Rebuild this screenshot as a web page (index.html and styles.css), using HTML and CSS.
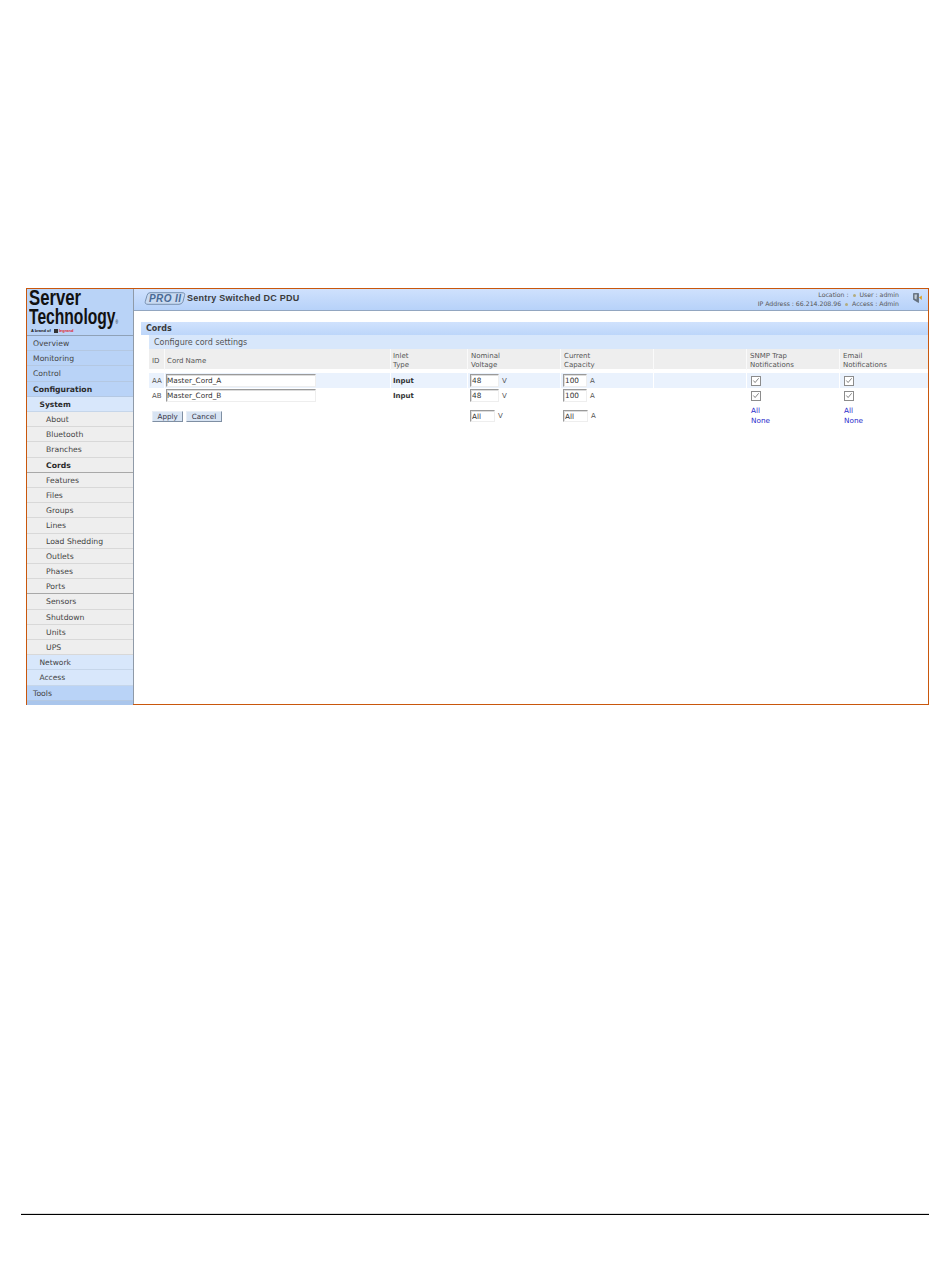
FILE: index.html
```html
<!DOCTYPE html>
<html lang="en">
<head>
<meta charset="utf-8">
<title>Cords</title>
<link rel="stylesheet" href="styles.css">
</head>
<body>
<div class="frame">
  <aside class="side">
    <div class="logo">
      <div class="logo-word logo-server">Server</div>
      <div class="logo-word logo-tech">Technology<span class="logo-reg">®</span></div>
      <div class="logo-sub">A brand of <span class="logo-box"></span><span class="logo-red">legrand</span></div>
    </div>
    <nav class="menu">
      <a class="m m1">Overview</a>
      <a class="m m1">Monitoring</a>
      <a class="m m1">Control</a>
      <a class="m m1 on">Configuration</a>
      <a class="m m2 on">System</a>
      <a class="m m3">About</a>
      <a class="m m3">Bluetooth</a>
      <a class="m m3">Branches</a>
      <a class="m m3 on dark">Cords</a>
      <a class="m m3">Features</a>
      <a class="m m3">Files</a>
      <a class="m m3">Groups</a>
      <a class="m m3">Lines</a>
      <a class="m m3">Load Shedding</a>
      <a class="m m3">Outlets</a>
      <a class="m m3">Phases</a>
      <a class="m m3 dark">Ports</a>
      <a class="m m3">Sensors</a>
      <a class="m m3">Shutdown</a>
      <a class="m m3">Units</a>
      <a class="m m3">UPS</a>
      <a class="m m2">Network</a>
      <a class="m m2">Access</a>
      <a class="m m1">Tools</a>
    </nav>
  </aside>
  <main class="main">
    <header class="top">
      <div class="brand">
        <svg class="pro" width="42" height="13" viewBox="0 0 42 13">
          <path d="M6 .7H38Q41.5.7 40.5 3.5L39 9.5Q38 12.3 35 12.3H4Q.6 12.3 1.3 9.5L3 3.5Q3.7.7 6 .7Z" fill="#c9daf1" stroke="#7790b0" stroke-width="1"/>
          <text class="pro-text" x="5" y="10">PRO II</text>
        </svg>
        <span class="title">Sentry Switched DC PDU</span>
      </div>
      <div class="info">
        <div class="info-line">Location : <i class="dot"></i> User : admin</div>
        <div class="info-line">IP Address : 66.214.208.96 <i class="dot"></i> Access : Admin</div>
      </div>
      <svg class="logout" width="9" height="10" viewBox="0 0 9 10">
        <path d="M.5.5H5.5V9.5L3 8 .5 6.5Z" fill="#66727f" stroke="#4d5763" stroke-width=".6"/>
        <path d="M1.5 1.5H4L3.5 6.5 1.5 5.5Z" fill="#c3ccd6"/>
        <path d="M6 4.5 8.8 2.5V7Z" fill="#d9a11f"/>
      </svg>
    </header>
    <h1 class="h1">Cords</h1>
    <section class="body">
      <h2 class="h2">Configure cord settings</h2>
      <div class="grid head">
        <div class="th">ID</div>
        <div class="th">Cord Name</div>
        <div class="th">Inlet<br>Type</div>
        <div class="th">Nominal<br>Voltage</div>
        <div class="th">Current<br>Capacity</div>
        <div class="th"></div>
        <div class="th">SNMP Trap<br>Notifications</div>
        <div class="th">Email<br>Notifications</div>
      </div>
      <div class="grid row alt">
        <div class="td">AA</div>
        <div class="td"><input class="inp name" value="Master_Cord_A"></div>
        <div class="td"><b>Input</b></div>
        <div class="td"><input class="inp num" value="48"><span class="unit">V</span></div>
        <div class="td"><input class="inp cap" value="100"><span class="unit">A</span></div>
        <div class="td"></div>
        <div class="td"><span class="chk"><svg width="9" height="9" viewBox="0 0 9 9"><path d="M1.5 4.5 3.5 6.8 7.5 2" fill="none" stroke="#777" stroke-width="1"/></svg></span></div>
        <div class="td"><span class="chk"><svg width="9" height="9" viewBox="0 0 9 9"><path d="M1.5 4.5 3.5 6.8 7.5 2" fill="none" stroke="#777" stroke-width="1"/></svg></span></div>
      </div>
      <div class="grid row">
        <div class="td">AB</div>
        <div class="td"><input class="inp name" value="Master_Cord_B"></div>
        <div class="td"><b>Input</b></div>
        <div class="td"><input class="inp num" value="48"><span class="unit">V</span></div>
        <div class="td"><input class="inp cap" value="100"><span class="unit">A</span></div>
        <div class="td"></div>
        <div class="td"><span class="chk"><svg width="9" height="9" viewBox="0 0 9 9"><path d="M1.5 4.5 3.5 6.8 7.5 2" fill="none" stroke="#777" stroke-width="1"/></svg></span></div>
        <div class="td"><span class="chk"><svg width="9" height="9" viewBox="0 0 9 9"><path d="M1.5 4.5 3.5 6.8 7.5 2" fill="none" stroke="#777" stroke-width="1"/></svg></span></div>
      </div>
      <div class="grid actions">
        <div class="btns"><button class="btn">Apply</button><button class="btn">Cancel</button></div>
        <div class="td"><input class="inp all" value="All"><span class="unit">V</span></div>
        <div class="td"><input class="inp all" value="All"><span class="unit">A</span></div>
        <div class="td"></div>
        <div class="td links"><a>All</a><a>None</a></div>
        <div class="td links"><a>All</a><a>None</a></div>
      </div>
    </section>
  </main>
</div>
<div class="rule"></div>
</body>
</html>
```
FILE: styles.css
```css
* { box-sizing: border-box; }
html, body { margin: 0; padding: 0; background: #fff; }
body {
  padding: 288px 21px 0 26px;
  font-family: "DejaVu Sans", sans-serif;
  font-size: 7.5px;
  color: #444;
}
.frame {
  display: flex;
  height: 417px;
  border: 1px solid #c9570c;
}
.side {
  width: 107px;
  flex: none;
  display: flex;
  flex-direction: column;
  background: #b9d3f7;
  border-right: 1px solid #8f9aa8;
}
.logo {
  height: 47px;
  flex: none;
  padding: 0 0 0 2px;
  border-bottom: 1px solid #8fa1b7;
  color: #111;
}
.logo-word {
  font-family: "Liberation Sans", sans-serif;
  font-weight: 700;
  font-size: 22px;
  line-height: 18px;
  white-space: nowrap;
  transform-origin: left top;
}
.logo-server { transform: scaleX(.76); }
.logo-tech { transform: scaleX(.71); margin-top: 1px; }
.logo-reg { font-size: 5px; font-weight: 400; line-height: 0; }
.logo-sub {
  font-family: "Liberation Sans", sans-serif;
  font-size: 4px;
  font-weight: 700;
  line-height: 5px;
  margin-top: 2px;
  padding-left: 2px;
  display: flex;
  align-items: center;
  gap: 1px;
  white-space: pre;
}
.logo-box { width: 4px; height: 4px; margin-left: 1px; background: #333; }
.logo-red { color: #e0202c; }
.menu { display: flex; flex-direction: column; flex: none; padding-bottom: 4px; background: #aac6ec; height: 369px; }
.m {
  flex: 1 1 0;
  display: flex;
  align-items: center;
  padding-top: .6px;
  font-size: 7.7px;
  color: #444;
  border-bottom: 1px solid #b4c8e2;
  white-space: nowrap;
}
.m1 { padding-left: 6px; background: #b9d3f7; }
.m2 { padding-left: 12.5px; background: #d8e7fb; font-size: 7.5px; border-bottom-color: #c6d6ea; }
.m3 { padding-left: 19px; background: #eeeeee; border-bottom-color: #d8d8d8; }
.m.on { font-weight: 700; color: #2b2b2b; }
.m3.dark { border-bottom-color: #a8a8a8; }
.main { flex: 1; min-width: 0; display: flex; flex-direction: column; }
.top {
  height: 22px;
  flex: none;
  display: flex;
  align-items: flex-start;
  background: linear-gradient(#cfe1fd, #b7d2f9);
  border-bottom: 1px solid #92a6c0;
  padding-right: 6px;
}
.brand { display: flex; align-items: center; gap: 1px; padding: 2px 0 0 10px; flex: 1; }
.pro { flex: none; margin-top: 1px; }
.pro-text { font-family: "Liberation Sans", sans-serif; font-size: 10px; font-weight: 700; font-style: italic; fill: #4a6a96; letter-spacing: .4px; }
.title { font-family: "Liberation Sans", sans-serif; font-size: 9px; font-weight: 700; letter-spacing: .25px; color: #3a3a3a; }
.info { text-align: right; font-size: 6.2px; line-height: 9px; padding-top: 1px; color: #555; margin-right: 14px; }
.info-line { white-space: nowrap; }
.dot { display: inline-block; width: 3px; height: 3px; margin: 0 2px; border-radius: 50%; background: #b3ac7e; }
.logout { margin-top: 4px; }
.h1 {
  flex: none;
  margin: 11px 0 0 7px;
  height: 13px;
  padding-left: 5px;
  font-size: 8px;
  line-height: 13px;
  font-weight: 700;
  color: #3a3a3a;
  background: linear-gradient(#d0e2fd, #bdd6fa);
}
.body { margin-left: 15px; display: flex; flex-direction: column; }
.h2 {
  height: 14px;
  margin: 0;
  padding: 1px 0 0 5px;
  font-size: 8px;
  line-height: 14px;
  font-weight: 400;
  color: #555;
  background: #d8e7fb;
}
.grid {
  display: grid;
  grid-template-columns: 15px 226px 77px 93px 93px 93px 93px 88px;
}
.head { height: 20px; margin-bottom: 4px; background: #eeeeee; }
.th { padding: 3px 0 0 4px; font-size: 7px; line-height: 9px; color: #555; display: flex; align-items: center; box-shadow: inset 1px 0 0 #fafafa; }
.th:first-child { box-shadow: none; padding-left: 3px; }
.th:nth-child(2), .th:nth-child(3) { padding-left: 3px; }
.row { height: 15px; }
.alt { background: #eaf2fd; }
.alt .td + .td { box-shadow: inset 1px 0 0 #fff; }
.td { padding-left: 3px; display: flex; align-items: center; font-size: 7px; color: #555; }
.row .td:nth-child(2) { padding-left: 2px; }
.td b { color: #333; }
.inp {
  height: 13px;
  padding: 0 1px;
  margin: 0;
  font: 7.3px "DejaVu Sans", sans-serif;
  color: #333;
  background: #fff;
  border: 1px solid;
  border-color: #9a9a9a #eee #eee #9a9a9a;
  box-shadow: inset 1px 1px 0 #dcdcdc;
  border-radius: 0;
  outline: 0;
}
.name { width: 150px; padding-left: 0; }
.num { width: 29px; }
.cap { width: 24px; }
.all { width: 25px; height: 12px; }
.unit { margin-left: 3px; line-height: 12px; }
.chk {
  width: 10px;
  height: 10px;
  margin-left: 2px;
  border: 1px solid #8c8c8c;
  background: #fff;
  display: flex;
  align-items: center;
  justify-content: center;
}
.actions { height: 26px; margin-top: 2px; }
.btns { grid-column: 1 / 4; display: flex; gap: 3px; padding: 6px 0 0 3px; align-items: flex-start; }
.btn {
  height: 11px;
  padding: 0 4.5px;
  margin: 0;
  font: 7.2px/9px "DejaVu Sans", sans-serif;
  color: #334;
  background: #d8e4f3;
  border: 1px solid;
  border-color: #e8eef6 #7f8fa3 #7f8fa3 #e8eef6;
  border-radius: 0;
}
.actions .td { align-items: flex-start; padding-top: 5px; }
.actions .links { flex-direction: column; line-height: 10px; padding: 1px 0 0 5px; font-size: 7.3px; }
.links a { color: #2a2acc; }
.rule { height: 2px; margin: 508px 0 0 -5px; background: #000; border-top: 1px solid #ddd; }
```
